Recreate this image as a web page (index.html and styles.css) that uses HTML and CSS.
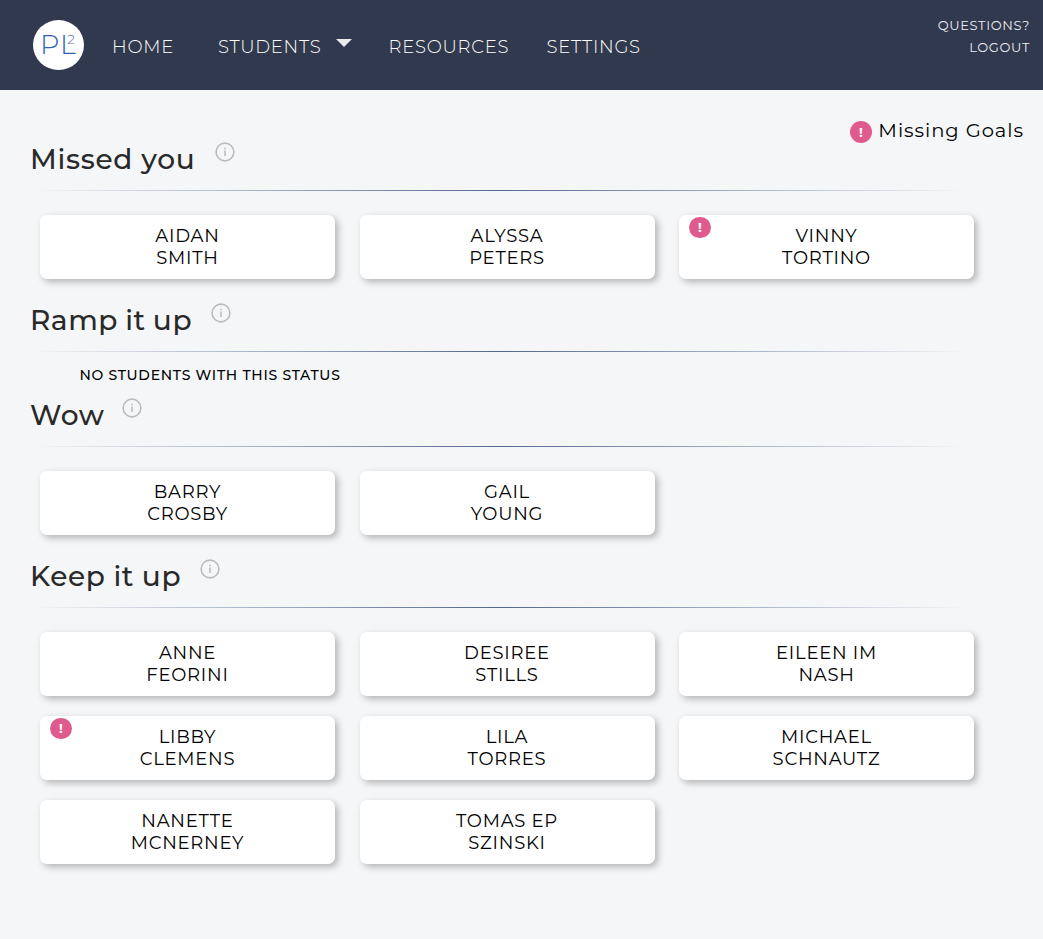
FILE: index.html
```html
<!DOCTYPE html>
<html lang="en">
<head>
<meta charset="utf-8">
<title>Students</title>
<link rel="stylesheet" href="styles.css">
</head>
<body>
<header class="topbar">
  <div class="logo"><span class="logo-text">PL</span><span class="logo-sup">2</span></div>
  <nav class="nav">
    <a class="nav-home">HOME</a>
    <a class="nav-students">STUDENTS</a>
    <svg class="caret" width="16" height="8" viewBox="0 0 16 8"><path d="M0 0H16L8 8Z" fill="#ececef"/></svg>
    <a class="nav-resources">RESOURCES</a>
    <a class="nav-settings">SETTINGS</a>
  </nav>
  <div class="account"><a class="questions">QUESTIONS?</a><a class="logout">LOGOUT</a></div>
</header>
<main class="content">
  <div class="legend"><span class="badge">!</span><span class="legend-text">Missing Goals</span></div>
  <section>
    <div class="head"><h2 class="missed">Missed you</h2><svg class="info" viewBox="0 0 20 20"><circle cx="10" cy="10" r="8.9"/><path d="M10 8.5V14M10 5.8V7.2"/></svg></div>
    <hr>
    <div class="cards">
      <div class="card">AIDAN<br>SMITH</div>
      <div class="card">ALYSSA<br>PETERS</div>
      <div class="card"><span class="badge pinned">!</span>VINNY<br>TORTINO</div>
    </div>
  </section>
  <section>
    <div class="head"><h2 class="ramp">Ramp it up</h2><svg class="info" viewBox="0 0 20 20"><circle cx="10" cy="10" r="8.9"/><path d="M10 8.5V14M10 5.8V7.2"/></svg></div>
    <hr>
    <p class="empty">NO STUDENTS WITH THIS STATUS</p>
  </section>
  <section>
    <div class="head"><h2 class="wow">Wow</h2><svg class="info" viewBox="0 0 20 20"><circle cx="10" cy="10" r="8.9"/><path d="M10 8.5V14M10 5.8V7.2"/></svg></div>
    <hr>
    <div class="cards">
      <div class="card">BARRY<br>CROSBY</div>
      <div class="card">GAIL<br>YOUNG</div>
    </div>
  </section>
  <section>
    <div class="head"><h2 class="keep">Keep it up</h2><svg class="info" viewBox="0 0 20 20"><circle cx="10" cy="10" r="8.9"/><path d="M10 8.5V14M10 5.8V7.2"/></svg></div>
    <hr>
    <div class="cards">
      <div class="card">ANNE<br>FEORINI</div>
      <div class="card">DESIREE<br>STILLS</div>
      <div class="card">EILEEN IM<br>NASH</div>
      <div class="card"><span class="badge pinned">!</span>LIBBY<br>CLEMENS</div>
      <div class="card">LILA<br>TORRES</div>
      <div class="card">MICHAEL<br>SCHNAUTZ</div>
      <div class="card">NANETTE<br>MCNERNEY</div>
      <div class="card">TOMAS EP<br>SZINSKI</div>
    </div>
  </section>
</main>
</body>
</html>
```
FILE: styles.css
```css
* { box-sizing: border-box; }
body {
  margin: 0;
  min-height: 939px;
  background: #f5f6f8;
  color: #000;
  font-family: Montserrat, Inter, sans-serif;
  letter-spacing: .75px;
}
.topbar {
  display: flex;
  align-items: flex-start;
  height: 90px;
  padding-left: 33px;
  background: #31394e;
  color: #fff;
}
.logo {
  display: flex;
  width: 51px;
  height: 50px;
  margin-top: 20px;
  padding: 9px 0 0 7px;
  border-radius: 50%;
  background: #fff;
  color: #2f62bd;
  font-weight: 300;
}
.logo-text { font-size: 27px; line-height: 32px; letter-spacing: 1px; }
.logo-sup { margin-left: -9.5px; font-size: 13.5px; line-height: 20px; color: #7477b8; }
.nav {
  display: flex;
  margin-left: 28px;
  padding-top: 36px;
  font-size: 18px;
  font-weight: 300;
  line-height: 22px;
}
.nav-home { width: 106px; }
.nav-students { width: 118px; }
.caret { margin-top: 3px; }
.nav-resources { width: 158px; margin-left: 36.5px; }
.account {
  display: flex;
  flex-direction: column;
  align-items: flex-end;
  margin-left: auto;
  padding: 14px 13px 0 0;
  font-size: 13px;
  line-height: 22px;
  letter-spacing: .65px;
  color: #ececf0;
}
.content { position: relative; padding: 48px 0 0 30px; }
.legend {
  position: absolute;
  top: 29px;
  right: 19px;
  display: flex;
  align-items: flex-start;
  font-size: 19.5px;
  line-height: 22px;
  letter-spacing: .95px;
}
.legend-text { margin-left: 6.5px; }
.legend .badge { margin-top: 2px; }
.badge {
  width: 22px;
  height: 22px;
  border-radius: 11px;
  background: #df5b8e;
  color: #fff;
  font-size: 13px;
  font-weight: 700;
  line-height: 22px;
  letter-spacing: 0;
  text-align: center;
}
.pinned { position: absolute; left: 10px; top: 2px; height: 21px; line-height: 21px; }
.head { display: flex; align-items: flex-start; height: 52px; }
h2 {
  margin: 3px 0 0;
  font-size: 28px;
  font-weight: 500;
  line-height: 36px;
  color: #292929;
  white-space: nowrap;
}
.missed { width: 167px; letter-spacing: .7px; }
.ramp { width: 163px; letter-spacing: .6px; word-spacing: -1px; }
.wow { width: 74px; }
.keep { width: 152px; letter-spacing: .7px; word-spacing: -.5px; }
.info {
  width: 20px;
  height: 20px;
  margin: 4px 0 0 17.5px;
  fill: none;
  stroke: #bcbcbe;
  stroke-width: 1.6;
}
hr {
  width: 938px;
  height: 1px;
  margin: 0;
  border: 0;
  background: linear-gradient(to right, transparent, #536790, transparent);
}
.cards {
  display: grid;
  grid-template-columns: repeat(3, 295px);
  gap: 20px 24.5px;
  padding: 24px 0 20px 10px;
}
.card {
  position: relative;
  height: 64px;
  padding-top: 10px;
  border-radius: 7px;
  background: #fff;
  box-shadow: 3px 3px 7px rgba(0, 0, 0, .27);
  font-size: 18px;
  line-height: 22px;
  text-align: center;
}
.empty {
  height: 42px;
  margin: 0;
  padding: 13px 0 0 49.5px;
  font-size: 14px;
  font-weight: 500;
  line-height: 20px;
  letter-spacing: .72px;
}
```
